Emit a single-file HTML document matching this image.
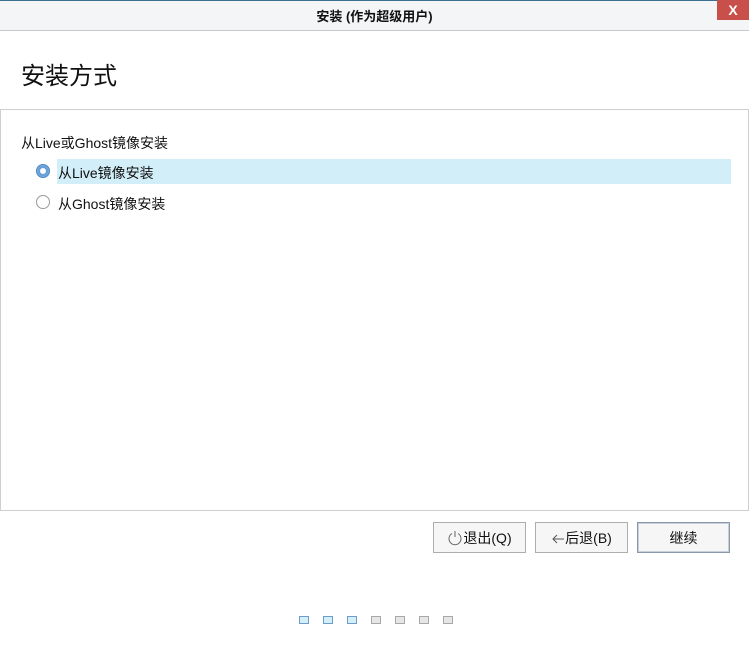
<!DOCTYPE html>
<html><head><meta charset="utf-8"><style>
body{margin:0;width:749px;height:662px;background:#fff;position:relative;overflow:hidden;font-family:"Liberation Sans","Noto Sans CJK SC",sans-serif;color:#111}
.a{position:absolute}
.btn{position:absolute;top:522px;height:31px;width:93px;border:1px solid #adadad;background:#f6f6f6;font-size:14px;line-height:31px;text-align:center;box-sizing:border-box}
.btn svg{vertical-align:-3px}
.dot{position:absolute;top:616px;width:10px;height:8px;box-sizing:border-box}
.on{background:#d3effb;border:1px solid #6a9cc5}
.off{background:#e6e6e6;border:1px solid #a8a8a8}
</style></head><body>
<div class="a" style="left:0;top:0;width:749px;height:1px;background:#3a6f8f"></div>
<div class="a" style="left:0;top:1px;width:749px;height:29px;background:#f4f5f7;border-bottom:1px solid #c9c9c9"></div>
<div class="a" style="left:0;top:6px;width:749px;text-align:center;font-size:13px;font-weight:bold">安装 (作为超级用户)</div>
<div class="a" style="left:717px;top:0;width:32px;height:20px;background:#c9504a;color:#fff;font-size:14px;font-weight:bold;text-align:center;line-height:20px">X</div>
<div class="a" style="left:21px;top:56px;font-size:24px">安装方式</div>
<div class="a" style="left:0;top:109px;width:747px;height:400px;border:1px solid #cfcfcf"></div>
<div class="a" style="left:21px;top:133px;font-size:14px">从Live或Ghost镜像安装</div>
<div class="a" style="left:57px;top:159px;width:674px;height:25px;background:#d2eef8"></div>
<div class="a" style="left:36px;top:164px;width:14px;height:14px;border-radius:50%;border:1px solid #4c86c2;background:radial-gradient(circle,#fff 0 2.5px,#5a96d2 3.5px,#7eb0e0 6px);box-sizing:border-box"></div>
<div class="a" style="left:58px;top:163px;font-size:14px">从Live镜像安装</div>
<div class="a" style="left:36px;top:195px;width:14px;height:14px;border-radius:50%;border:1px solid #9a9a9a;background:#fff;box-sizing:border-box"></div>
<div class="a" style="left:58px;top:194px;font-size:14px">从Ghost镜像安装</div>
<div class="btn" style="left:433px"><svg width="16" height="16" viewBox="0 0 16 16"><path d="M5 3.5A6 6 0 1 0 11 3.5" fill="none" stroke="#666" stroke-width="1"/><path d="M8 1V7" stroke="#666"/></svg>退出(Q)</div>
<div class="btn" style="left:535px"><svg width="14" height="14" viewBox="0 0 14 14"><path d="M13 7H2M6 3L2 7L6 11" fill="none" stroke="#555" stroke-width="1"/></svg>后退(B)</div>
<div class="btn" style="left:637px;border:1px solid #8a97aa;box-shadow:inset 0 0 0 1px #c8d0dc">继续</div>
<div class="dot on" style="left:299px"></div><div class="dot on" style="left:323px"></div><div class="dot on" style="left:347px"></div>
<div class="dot off" style="left:371px"></div><div class="dot off" style="left:395px"></div><div class="dot off" style="left:419px"></div><div class="dot off" style="left:443px"></div>
</body></html>
